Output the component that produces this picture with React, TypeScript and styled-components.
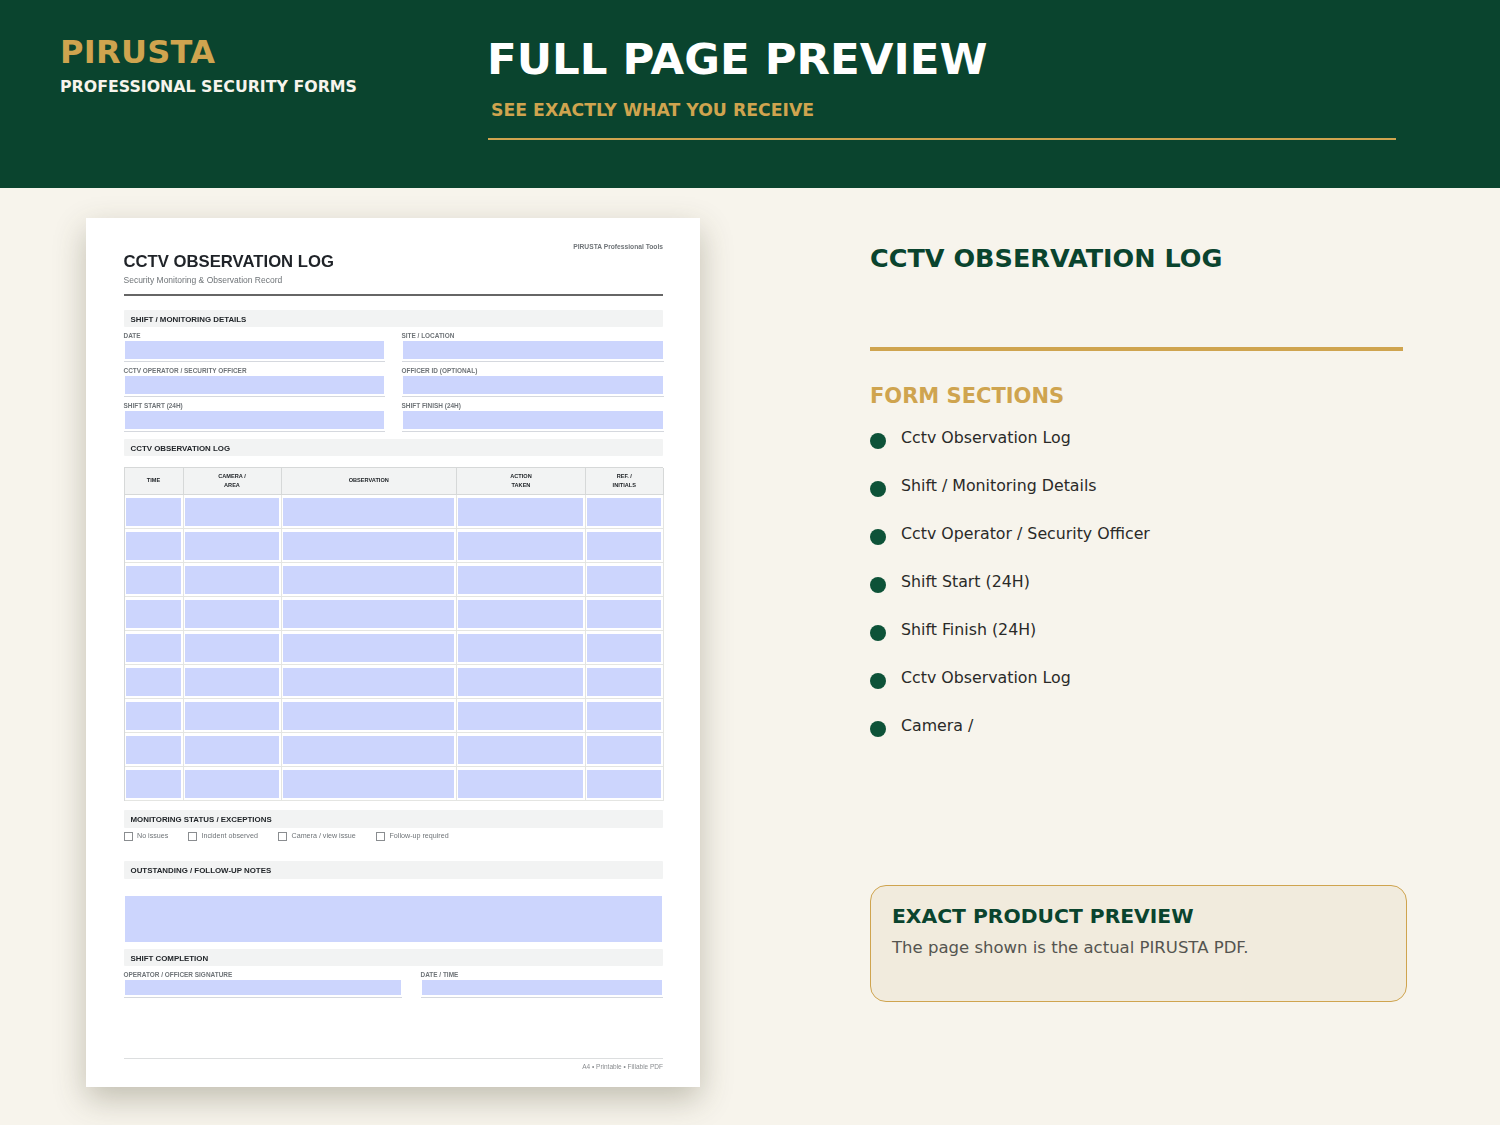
import { FC } from "react";
import styled, { createGlobalStyle } from "styled-components";

const sections = [
  "Cctv Observation Log",
  "Shift / Monitoring Details",
  "Cctv Operator / Security Officer",
  "Shift Start (24H)",
  "Shift Finish (24H)",
  "Cctv Observation Log",
  "Camera /",
];

const columns = [
  { width: 59, label: ["TIME"] },
  { width: 98, label: ["CAMERA /", "AREA"] },
  { width: 175.5, label: ["OBSERVATION"] },
  { width: 129, label: ["ACTION", "TAKEN"] },
  { width: 77.5, label: ["REF. /", "INITIALS"] },
];

const fieldRows = [
  ["DATE", "SITE / LOCATION"],
  ["CCTV OPERATOR / SECURITY OFFICER", "OFFICER ID (OPTIONAL)"],
  ["SHIFT START (24H)", "SHIFT FINISH (24H)"],
];

const statusOptions = [
  { label: "No issues", width: 64.5 },
  { label: "Incident observed", width: 90 },
  { label: "Camera / view issue", width: 98 },
  { label: "Follow-up required", width: 100 },
];

const App: FC = () => {
  return (
    <>
      <GlobalStyle />
      <Header>
        <Brand>
          <BrandName>PIRUSTA</BrandName>
          <BrandTag>PROFESSIONAL SECURITY FORMS</BrandTag>
        </Brand>
        <HeaderMain>
          <PageTitle>FULL PAGE PREVIEW</PageTitle>
          <PageSubtitle>SEE EXACTLY WHAT YOU RECEIVE</PageSubtitle>
          <HeaderRule />
        </HeaderMain>
      </Header>

      <Main>
        <Sheet>
          <SheetTop>
            <div>
              <DocTitle>CCTV OBSERVATION LOG</DocTitle>
              <DocSubtitle>Security Monitoring &amp; Observation Record</DocSubtitle>
            </div>
            <DocBrand>PIRUSTA Professional Tools</DocBrand>
          </SheetTop>
          <DocRule />

          <SectionBar $top={13.5}>SHIFT / MONITORING DETAILS</SectionBar>
          <FieldGrid>
            {fieldRows.flat().map((label) => (
              <FieldBlock key={label}>
                <FieldLabel>{label}</FieldLabel>
                <FieldInput />
              </FieldBlock>
            ))}
          </FieldGrid>

          <SectionBar $top={6.7}>CCTV OBSERVATION LOG</SectionBar>
          <LogTable>
            <LogRow $head>
              {columns.map((col) => (
                <HeadCell key={col.label[0]} $width={col.width}>
                  {col.label.map((line) => (
                    <span key={line}>{line}</span>
                  ))}
                </HeadCell>
              ))}
            </LogRow>
            {Array.from({ length: 9 }).map((_, row) => (
              <LogRow key={row}>
                {columns.map((col) => (
                  <BodyCell key={col.label[0]} $width={col.width}>
                    <CellFill />
                  </BodyCell>
                ))}
              </LogRow>
            ))}
          </LogTable>

          <SectionBar $top={9}>MONITORING STATUS / EXCEPTIONS</SectionBar>
          <StatusRow>
            {statusOptions.map((opt) => (
              <StatusItem key={opt.label} $width={opt.width}>
                <CheckBox />
                <StatusLabel>{opt.label}</StatusLabel>
              </StatusItem>
            ))}
          </StatusRow>

          <SectionBar $top={20.6}>OUTSTANDING / FOLLOW-UP NOTES</SectionBar>
          <NotesField />

          <SectionBar $top={7.2}>SHIFT COMPLETION</SectionBar>
          <SignRow>
            <SignBlock $width={278.5}>
              <FieldLabel>OPERATOR / OFFICER SIGNATURE</FieldLabel>
              <SignInput />
            </SignBlock>
            <SignBlock $width={242.5}>
              <FieldLabel>DATE / TIME</FieldLabel>
              <SignInput />
            </SignBlock>
          </SignRow>

          <SheetFooter>A4 • Printable • Fillable PDF</SheetFooter>
        </Sheet>

        <Side>
          <SideTitle>CCTV OBSERVATION LOG</SideTitle>
          <SideRule />
          <SideHeading>FORM SECTIONS</SideHeading>
          <SectionList>
            {sections.map((item, i) => (
              <SectionItem key={i}>
                <Bullet />
                <span>{item}</span>
              </SectionItem>
            ))}
          </SectionList>
          <Callout>
            <CalloutTitle>EXACT PRODUCT PREVIEW</CalloutTitle>
            <CalloutText>The page shown is the actual PIRUSTA PDF.</CalloutText>
          </Callout>
        </Side>
      </Main>
    </>
  );
};

export default App;

const GlobalStyle = createGlobalStyle`
  html, body {
    margin: 0;
    padding: 0;
    background: #f7f4ec;
  }

  * {
    box-sizing: border-box;
  }

  #root {
    width: 1500px;
    height: 1125px;
    overflow: hidden;
    font-family: "DejaVu Sans", sans-serif;
  }
`;

const Header = styled.header`
  display: flex;
  height: 188px;
  padding-left: 60px;
  background: #0a442e;
`;

const Brand = styled.div`
  width: 428px;
  padding-top: 33px;
`;

const BrandName = styled.div`
  font-size: 32px;
  line-height: 38px;
  font-weight: 700;
  letter-spacing: 0.3px;
  color: #cfa44f;
`;

const BrandTag = styled.div`
  margin-top: 5.5px;
  font-size: 15.8px;
  line-height: 20px;
  font-weight: 700;
  color: #f7f4ec;
`;

const HeaderMain = styled.div`
  width: 908px;
  padding-top: 33px;
`;

const PageTitle = styled.h1`
  margin: 0 0 0 -1px;
  font-size: 43.5px;
  line-height: 52px;
  font-weight: 700;
  color: #ffffff;
`;

const PageSubtitle = styled.div`
  margin-top: 14px;
  padding-left: 3px;
  font-size: 17.3px;
  line-height: 22px;
  font-weight: 700;
  color: #cfa44f;
`;

const HeaderRule = styled.div`
  height: 2px;
  margin-top: 17px;
  background: #cfa44f;
`;

const Main = styled.main`
  display: flex;
  align-items: flex-start;
  padding: 30px 0 0 86px;
`;

const Sheet = styled.section`
  display: flex;
  flex-direction: column;
  flex: none;
  position: relative;
  width: 614px;
  height: 869px;
  padding: 0 37px 0 37.5px;
  background: #ffffff;
  box-shadow: 0 12px 30px rgba(70, 65, 40, 0.3);
  font-family: "Liberation Sans", Arial, sans-serif;
  filter: blur(0.3px);
`;

const SheetTop = styled.div`
  display: flex;
  justify-content: space-between;
  height: 76px;
  padding-top: 34px;
`;

const DocTitle = styled.div`
  font-size: 16.7px;
  line-height: 20px;
  font-weight: 700;
  color: #1f2328;
`;

const DocSubtitle = styled.div`
  margin-top: 2px;
  font-size: 8.5px;
  line-height: 12px;
  color: #6f7478;
`;

const DocBrand = styled.div`
  margin-top: -10px;
  font-size: 6.7px;
  line-height: 9px;
  font-weight: 700;
  color: #6f7478;
`;

const DocRule = styled.div`
  height: 2px;
  background: #666666;
`;

const SectionBar = styled.div<{ $top: number }>`
  flex: none;
  height: 17.5px;
  margin-top: ${({ $top }) => $top}px;
  padding-left: 7px;
  border-radius: 1px;
  background: #f2f3f3;
  font-size: 7.9px;
  line-height: 19.5px;
  font-weight: 700;
  color: #22262a;
`;

const FieldGrid = styled.div`
  display: grid;
  grid-template-columns: 261px 262px;
  column-gap: 17px;
  row-gap: 4.8px;
  margin-top: 4.5px;
`;

const FieldBlock = styled.div`
  display: flex;
  flex-direction: column;
`;

const FieldLabel = styled.div`
  height: 9px;
  font-size: 6.45px;
  line-height: 8px;
  font-weight: 700;
  color: #6f7478;
  white-space: nowrap;
`;

const FieldInput = styled.div`
  height: 21.4px;
  padding: 0 1px 2px;
  border-bottom: 0.7px solid #d5d8de;
  background: #ccd5fd content-box;
`;

const LogTable = styled.div`
  margin-top: 10.5px;
  border-top: 1px solid #d6d8d8;
  border-left: 1px solid #d6d8d8;
`;

const LogRow = styled.div<{ $head?: boolean }>`
  display: flex;
  height: ${({ $head }) => ($head ? "27.2px" : "34px")};
  background: ${({ $head }) => ($head ? "#f2f3f3" : "#ffffff")};
`;

const HeadCell = styled.div<{ $width: number }>`
  display: flex;
  flex-direction: column;
  justify-content: center;
  align-items: center;
  flex: none;
  width: ${({ $width }) => $width}px;
  border-right: 1px solid #d6d8d8;
  border-bottom: 1px solid #d6d8d8;
  font-size: 5.6px;
  line-height: 9.4px;
  font-weight: 700;
  color: #22262a;
`;

const BodyCell = styled.div<{ $width: number }>`
  flex: none;
  width: ${({ $width }) => $width}px;
  padding: 2.5px 2px 2.2px 1px;
  border-right: 1px solid #e4e5e2;
  border-bottom: 1px solid #e4e5e2;
`;

const CellFill = styled.div`
  height: 100%;
  background: #ccd5fd;
`;

const StatusRow = styled.div`
  display: flex;
  align-items: center;
  height: 9px;
  margin-top: 4.2px;
`;

const StatusItem = styled.div<{ $width: number }>`
  display: flex;
  align-items: center;
  gap: 4.5px;
  flex: none;
  width: ${({ $width }) => $width}px;
`;

const CheckBox = styled.span`
  flex: none;
  width: 9px;
  height: 9px;
  border: 0.8px solid #8a8d90;
  background: #ffffff;
`;

const StatusLabel = styled.span`
  font-size: 7.15px;
  line-height: 9px;
  color: #6f7478;
  white-space: nowrap;
`;

const NotesField = styled.div`
  flex: none;
  height: 45.5px;
  margin: 17.2px 1px 0;
  background: #ccd5fd;
`;

const SignRow = styled.div`
  display: flex;
  justify-content: space-between;
  margin-top: 4.5px;
`;

const SignBlock = styled.div<{ $width: number }>`
  width: ${({ $width }) => $width}px;
`;

const SignInput = styled.div`
  height: 18.5px;
  padding: 0 1px 2px;
  border-bottom: 0.7px solid #d5d8de;
  background: #ccd5fd content-box;
`;

const SheetFooter = styled.div`
  position: absolute;
  left: 37.5px;
  right: 37px;
  top: 840px;
  padding-top: 4px;
  border-top: 0.7px solid #dcdedf;
  font-size: 6.5px;
  line-height: 8px;
  color: #8a8d90;
  text-align: right;
`;

const Side = styled.aside`
  display: flex;
  flex-direction: column;
  width: 537px;
  margin-left: 170px;
  padding-top: 25px;
`;

const SideTitle = styled.h2`
  margin: 0;
  font-size: 25.5px;
  line-height: 31px;
  font-weight: 700;
  color: #0a442e;
`;

const SideRule = styled.div`
  width: 533px;
  height: 4px;
  margin-top: 73px;
  background: #cfa44f;
`;

const SideHeading = styled.h3`
  margin: 32px 0 0;
  font-size: 21px;
  line-height: 26px;
  font-weight: 700;
  color: #cfa44f;
`;

const SectionList = styled.ul`
  display: flex;
  flex-direction: column;
  gap: 26px;
  margin: 18px 0 0;
  padding: 0;
  list-style: none;
`;

const SectionItem = styled.li`
  display: flex;
  height: 22px;
  gap: 15px;
  font-size: 15.8px;
  line-height: 22px;
  color: #2a2a28;
`;

const Bullet = styled.span`
  flex: none;
  width: 16px;
  height: 16px;
  margin-top: 6px;
  border-radius: 50%;
  background: #0d5238;
`;

const Callout = styled.div`
  height: 117px;
  margin-top: 148px;
  padding: 18px 21px;
  border: 1.3px solid #cfa44f;
  border-radius: 16px;
  background: #f1ebdd;
`;

const CalloutTitle = styled.div`
  font-size: 20.3px;
  line-height: 25px;
  font-weight: 700;
  color: #0a442e;
`;

const CalloutText = styled.div`
  margin-top: 8px;
  font-size: 16.5px;
  line-height: 22px;
  color: #555550;
`;
